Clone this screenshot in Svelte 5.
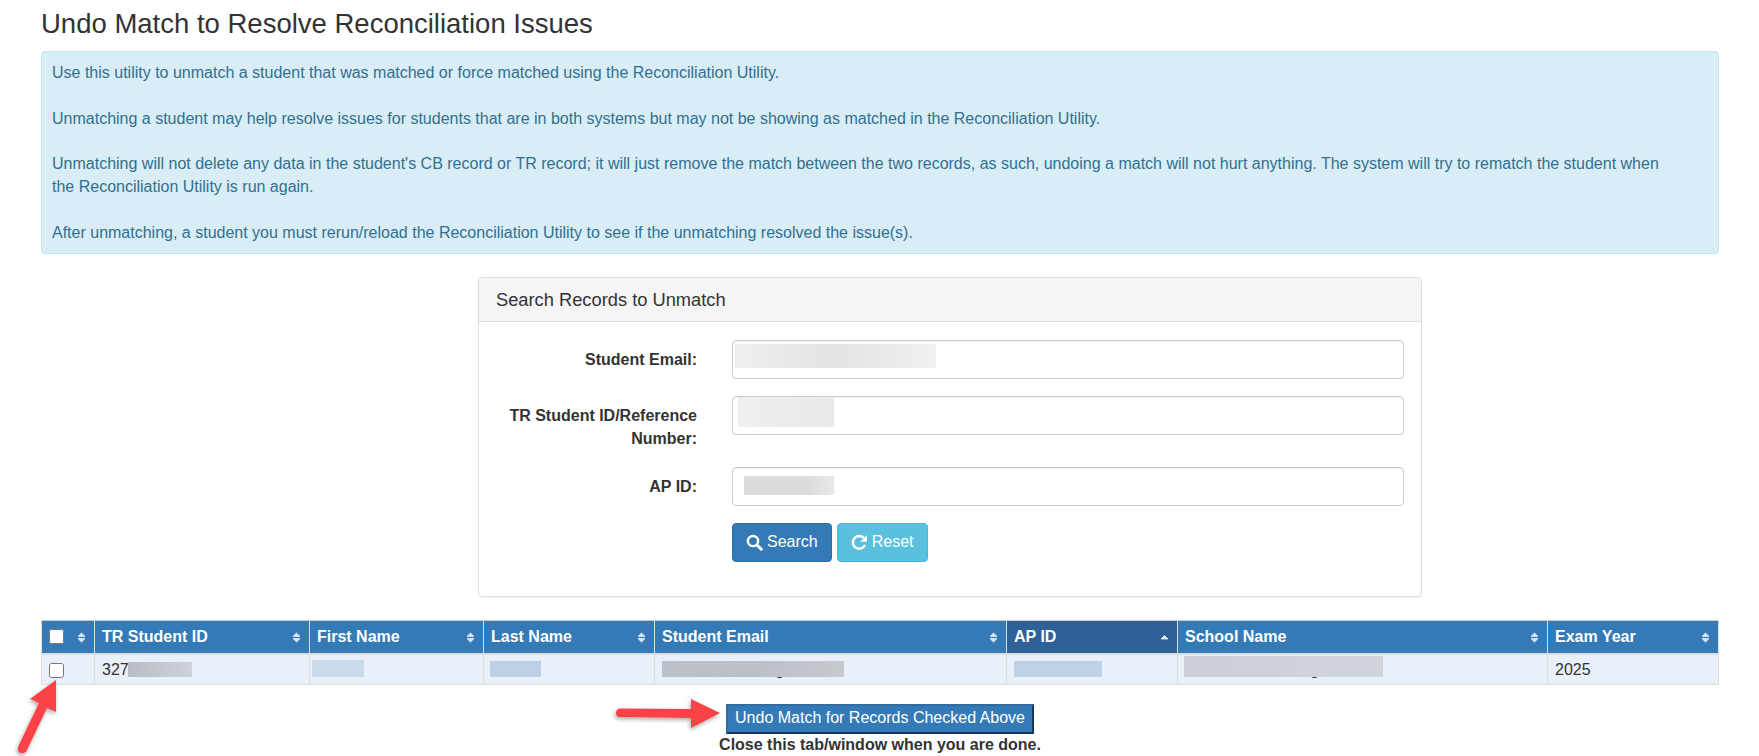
<script>
  const columns = [
    { label: 'TR Student ID' },
    { label: 'First Name' },
    { label: 'Last Name' },
    { label: 'Student Email' },
    { label: 'AP ID', sorted: true },
    { label: 'School Name' },
    { label: 'Exam Year' }
  ];
</script>

<div class="page">
  <h3>Undo Match to Resolve Reconciliation Issues</h3>

  <div class="alert">
    Use this utility to unmatch a student that was matched or force matched using the Reconciliation Utility.<br /><br />
    Unmatching a student may help resolve issues for students that are in both systems but may not be showing as matched in the Reconciliation Utility.<br /><br />
    Unmatching will not delete any data in the student's CB record or TR record; it will just remove the match between the two records, as such, undoing a match will not hurt anything. The system will try to rematch the student when the Reconciliation Utility is run again.<br /><br />
    After unmatching, a student you must rerun/reload the Reconciliation Utility to see if the unmatching resolved the issue(s).
  </div>

  <div class="panel">
    <div class="panel-heading">Search Records to Unmatch</div>
    <form class="panel-body" on:submit|preventDefault>
      <label for="email">Student Email:</label>
      <div class="field">
        <input id="email" type="text" />
        <span class="redact r-email"></span>
      </div>

      <label for="tr">TR Student ID/Reference Number:</label>
      <div class="field">
        <input id="tr" type="text" />
        <span class="redact r-tr"></span>
      </div>

      <label for="ap">AP ID:</label>
      <div class="field">
        <input id="ap" type="text" />
        <span class="redact r-ap"></span>
      </div>

      <div class="buttons">
        <button class="btn btn-primary" type="submit">
          <svg viewBox="0 0 16 16" width="17" height="17" aria-hidden="true">
            <circle cx="6.6" cy="6.6" r="4.8" fill="none" stroke="#fff" stroke-width="2.3" />
            <path d="M10.2 10.2 L14.4 14.4" stroke="#fff" stroke-width="2.8" stroke-linecap="round" />
          </svg>
          Search
        </button>
        <button class="btn btn-info" type="button">
          <svg viewBox="0 0 16 16" width="17" height="17" aria-hidden="true">
            <path d="M13.2 10.4 A6 6 0 1 1 12 3.6" fill="none" stroke="#fff" stroke-width="2.3" />
            <path d="M15 1 L15 7.4 L8.8 7.4 Z" fill="#fff" />
          </svg>
          Reset
        </button>
      </div>
    </form>
  </div>

  <table>
    <colgroup>
      <col class="c0" /><col class="c1" /><col class="c2" /><col class="c3" /><col class="c4" /><col class="c5" /><col class="c6" /><col class="c7" />
    </colgroup>
    <thead>
      <tr>
        <th>
          <input class="check" type="checkbox" />
          <svg class="sort" viewBox="0 0 9 11" width="9" height="11" aria-hidden="true">
            <path d="M4.5 1 L8 4.4 L1 4.4 Z M4.5 10 L8 6.6 L1 6.6 Z" fill="#e4ecf4" stroke="#e4ecf4" stroke-width="0.8" stroke-linejoin="round" />
          </svg>
        </th>
        {#each columns as col}
          <th class:sorted={col.sorted}>
            {col.label}
            <svg class="sort" viewBox="0 0 9 11" width="9" height="11" aria-hidden="true">
              {#if col.sorted}
                <path d="M4.5 3.6 L8 7 L1 7 Z" fill="#eef3f8" stroke="#eef3f8" stroke-width="0.8" stroke-linejoin="round" />
              {:else}
                <path d="M4.5 1 L8 4.4 L1 4.4 Z M4.5 10 L8 6.6 L1 6.6 Z" fill="#e4ecf4" stroke="#e4ecf4" stroke-width="0.8" stroke-linejoin="round" />
              {/if}
            </svg>
          </th>
        {/each}
      </tr>
    </thead>
    <tbody>
      <tr>
        <td class="check-cell"><input class="check" type="checkbox" /></td>
        <td>327<span class="redact b-id"></span></td>
        <td><span class="redact b-first"></span></td>
        <td><span class="redact b-last"></span></td>
        <td><span class="peek p-email">@g</span><span class="redact b-email"></span></td>
        <td><span class="redact b-ap"></span></td>
        <td><span class="peek p-school">g</span><span class="redact b-school"></span></td>
        <td>2025</td>
      </tr>
    </tbody>
  </table>

  <div class="actions">
    <button class="undo" type="button">Undo Match for Records Checked Above</button>
    <strong>Close this tab/window when you are done.</strong>
  </div>

  <!-- red annotation arrows drawn on top of the screenshot -->
  <svg class="arrows" viewBox="0 0 1759 756" width="1759" height="756" aria-hidden="true">
    <defs>
      <filter id="soft" x="-30%" y="-30%" width="160%" height="160%">
        <feDropShadow dx="-1" dy="2" stdDeviation="2" flood-color="#000" flood-opacity="0.35" />
      </filter>
    </defs>
    <g filter="url(#soft)" fill="#fb4246" stroke="none">
      <path d="M56 680 L30 699 L39 703 L18 747 Q17 752 21 753 Q25 754 27 750 L47 708 L56 712 Z" />
      <path d="M720 713 L691 699 L691 709 L620 708.5 Q616 709 616 713 Q616 717 620 717 L691 718 L691 728 Z" />
    </g>
  </svg>
</div>

<style>
  :global(body) {
    margin: 0;
    background: #fff;
  }
  .page {
    position: relative;
    height: 756px;
    overflow: hidden;
    padding: 9px 40px 0 41px;
    box-sizing: border-box;
    font-family: "Liberation Sans", Arial, sans-serif;
    font-size: 16px;
    line-height: 22.8px;
    color: #333;
  }
  h3 {
    margin: 0 0 12px;
    font-size: 27.5px;
    font-weight: 500;
    line-height: 30px;
  }
  .alert {
    padding: 10px 36px 10px 10px;
    background: #d9edf7;
    border: 1px solid #bce8f1;
    border-radius: 4px;
    color: #31708f;
    height: 203px;
    box-sizing: border-box;
  }
  .panel {
    width: 944px;
    margin: 23px 0 23px 437px;
    border: 1px solid #ddd;
    border-radius: 4px;
    box-shadow: 0 1px 1px rgba(0, 0, 0, 0.05);
    box-sizing: border-box;
  }
  .panel-heading {
    height: 44px;
    box-sizing: border-box;
    padding: 10px 17px;
    font-size: 18.3px;
    line-height: 24px;
    background: #f5f5f5;
    border-bottom: 1px solid #ddd;
    border-radius: 3px 3px 0 0;
  }
  .panel-body {
    display: grid;
    grid-template-columns: 200px 1fr;
    column-gap: 35px;
    row-gap: 17px;
    padding: 18px 17px 34px 18px;
  }
  label {
    padding-top: 9px;
    margin-bottom: -1px;
    font-weight: 700;
    text-align: right;
  }
  .field {
    position: relative;
    height: 39px;
  }
  .field input {
    display: block;
    width: 100%;
    height: 39px;
    box-sizing: border-box;
    background: #fff;
    border: 1px solid #ccc;
    border-radius: 4px;
    box-shadow: inset 0 1px 1px rgba(0, 0, 0, 0.075);
  }
  .redact {
    position: absolute;
    display: block;
  }
  .r-email {
    left: 3px;
    top: 4px;
    width: 201px;
    height: 24px;
    background: linear-gradient(90deg, #eeefef, #e2e3e3 50%, #f1f1f1);
  }
  .r-tr {
    left: 6px;
    top: 2px;
    width: 96px;
    height: 29px;
    background: linear-gradient(90deg, #efefef, #e9e9e8);
  }
  .r-ap {
    left: 12px;
    top: 9px;
    width: 90px;
    height: 19px;
    background: linear-gradient(90deg, #dcdcdc, #dcdcdc 70%, #e8e8e8);
  }
  .buttons {
    grid-column: 2;
    display: flex;
    gap: 5px;
  }
  .btn {
    display: flex;
    align-items: center;
    gap: 4px;
    height: 39px;
    padding: 0 13px;
    box-sizing: border-box;
    font: inherit;
    color: #fff;
    border: 1px solid;
    border-radius: 4px;
  }
  .btn-primary {
    background: #337ab7;
    border-color: #2e6da4;
  }
  .btn-info {
    background: #5bc0de;
    border-color: #46b8da;
  }
  table {
    width: 1677px;
    table-layout: fixed;
    border-collapse: collapse;
  }
  .c0 { width: 53px; }
  .c1 { width: 215px; }
  .c2 { width: 174px; }
  .c3 { width: 171px; }
  .c4 { width: 352px; }
  .c5 { width: 171px; }
  .c6 { width: 370px; }
  .c7 { width: 171px; }
  th {
    position: relative;
    height: 34px;
    padding: 2px 7px 0;
    box-sizing: border-box;
    text-align: left;
    font-weight: 700;
    color: #fff;
    background: #337ab7;
    border: 1px solid #ddd;
    border-bottom-width: 2px;
    border-top-color: #ccc;
  }
  th.sorted {
    background: #2d6197;
  }
  .sort {
    position: absolute;
    right: 8px;
    top: 11px;
  }
  td {
    position: relative;
    height: 30px;
    padding: 2px 7px 0;
    box-sizing: border-box;
    background: #e9f0f9;
    border: 1px solid #ddd;
  }
  .check {
    display: block;
    width: 15px;
    height: 15px;
    margin: 0;
  }
  th .check {
    margin-top: -2px;
  }
  .check-cell .check {
    margin-top: 1px;
  }
  .peek {
    position: absolute;
    top: 4px;
  }
  .p-email {
    left: 104px;
  }
  .p-school {
    left: 132px;
  }
  .b-id {
    left: 33px;
    top: 7px;
    width: 64px;
    height: 15px;
    background: linear-gradient(90deg, #b9bdc6, #cdd1d8);
  }
  .b-first {
    left: 2px;
    top: 5px;
    width: 52px;
    height: 17px;
    background: #c9daeb;
  }
  .b-last {
    left: 6px;
    top: 6px;
    width: 51px;
    height: 16px;
    background: #bcd0e5;
  }
  .b-email {
    left: 7px;
    top: 6px;
    width: 182px;
    height: 16px;
    background: linear-gradient(90deg, #bcc0c8, #bbbfc8 50%, #c6cace);
  }
  .b-ap {
    left: 7px;
    top: 6px;
    width: 88px;
    height: 16px;
    background: #bed2e7;
  }
  .b-school {
    left: 6px;
    top: 1px;
    width: 199px;
    height: 21px;
    background: linear-gradient(90deg, #cbced6, #d0d5dc);
  }
  .actions {
    display: flex;
    flex-direction: column;
    align-items: center;
    margin-top: 19px;
  }
  .undo {
    height: 30px;
    width: 308px;
    padding: 0;
    box-sizing: border-box;
    font: inherit;
    color: #fff;
    background: #337ab7;
    border: 2px solid;
    border-color: #2e6da4 #173a5a #173a5a #2e6da4;
  }
  .arrows {
    position: absolute;
    left: 0;
    top: 0;
    pointer-events: none;
  }
</style>
